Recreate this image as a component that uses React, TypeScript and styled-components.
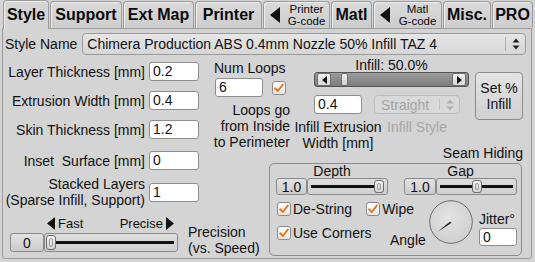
import React from 'react';
import styled, { createGlobalStyle } from 'styled-components';

const GlobalStyle = createGlobalStyle`
  html, body {
    margin: 0;
    padding: 0;
    background: #d4d4d4;
  }
  body {
    width: 535px;
    height: 262px;
    overflow: hidden;
    font-family: "Liberation Sans", Arial, sans-serif;
    font-size: 14px;
    color: #111;
  }
  * { box-sizing: border-box; }
`;

const Page = styled.div`
  width: 535px;
  height: 262px;
  display: flex;
  flex-direction: column;
`;

/* ---------- tabs ---------- */

const TabBar = styled.div`
  height: 28px;
  display: flex;
  align-items: flex-end;
  gap: 1px;
  padding-left: 3px;
`;

const Tab = styled.div<{ $w: number; $active?: boolean }>`
  width: ${p => p.$w}px;
  height: ${p => (p.$active ? 29 : 27)}px;
  margin-bottom: ${p => (p.$active ? -1 : 0)}px;
  position: relative;
  z-index: ${p => (p.$active ? 2 : 0)};
  border: 1px solid #9a9a9a;
  border-bottom: none;
  border-radius: 4px 4px 0 0;
  background: ${p => (p.$active ? '#d4d4d4' : 'linear-gradient(#dadada, #cdcdcd)')};
  box-shadow: inset 1px 1px 0 #ececec;
  display: flex;
  align-items: center;
  justify-content: center;
  font-weight: bold;
  font-size: 16px;
  color: #0a0a0a;
`;

const ArrowTabInner = styled.div`
  display: flex;
  align-items: center;
  width: 100%;
  padding-left: 6px;
  gap: 4px;
`;

const SmallTabText = styled.div`
  flex: 1;
  display: flex;
  flex-direction: column;
  align-items: center;
  gap: 1px;
  font-weight: normal;
  font-size: 11.5px;
  line-height: 11px;
`;

/* ---------- panel ---------- */

const Panel = styled.div`
  height: 231px;
  margin: 0 3px 0 2px;
  border: 1px solid #9a9a9a;
  border-radius: 0 0 3px 3px;
  display: flex;
  flex-direction: column;
`;

const NameRow = styled.div`
  display: flex;
  align-items: center;
  height: 22px;
  margin-top: 4px;
  padding-left: 2px;
`;

const NameLabel = styled.span`
  margin-right: 5px;
  white-space: nowrap;
`;

const SelectBox = styled.div<{ $w: number; $disabled?: boolean }>`
  width: ${p => p.$w}px;
  height: ${p => (p.$disabled ? 19 : 22)}px;
  display: flex;
  align-items: center;
  border: 1px solid ${p => (p.$disabled ? '#bcbcbc' : '#9a9a9a')};
  border-radius: 4px;
  background: ${p => (p.$disabled ? '#d9d9d9' : 'linear-gradient(#e6e6e6, #d6d6d6)')};
  color: ${p => (p.$disabled ? '#a4a4a4' : '#111')};
  padding-left: ${p => (p.$disabled ? 6 : 4)}px;
  white-space: nowrap;
`;

const SelectText = styled.span`
  flex: 1;
  overflow: hidden;
`;

const SelectSep = styled.span<{ $disabled?: boolean }>`
  width: 1px;
  align-self: stretch;
  margin: 3px 0;
  background: ${p => (p.$disabled ? '#c2c2c2' : '#b0b0b0')};
`;

const SelectArrows = styled.span`
  width: 19px;
  display: flex;
  justify-content: center;
`;

const TopSection = styled.div`
  display: flex;
  height: 92px;
  margin-top: 3px;
`;

const FormCol = styled.div`
  width: 196px;
  padding-top: 4px;
  display: flex;
  flex-direction: column;
  gap: 10px;
`;

const FieldRow = styled.div<{ $top?: number }>`
  width: 196px;
  display: flex;
  align-items: center;
  justify-content: flex-end;
  gap: 4px;
  margin-top: ${p => p.$top ?? 0}px;
`;

const FieldLabel = styled.span`
  text-align: right;
  line-height: 16px;
  white-space: nowrap;
`;

const TextInput = styled.div<{ $w: number; $h?: number }>`
  width: ${p => p.$w}px;
  height: ${p => p.$h ?? 19}px;
  flex: none;
  background: #fff;
  border: 1px solid #8e8e8e;
  border-radius: 3px;
  padding-left: 3px;
  line-height: ${p => (p.$h ?? 19) - 2}px;
`;

const LoopsCol = styled.div`
  width: 80px;
  margin-left: 11px;
  display: flex;
  flex-direction: column;
`;

const LoopsTitle = styled.div`
  padding-left: 4px;
  margin-top: 2px;
  line-height: 16px;
`;

const LoopsInputRow = styled.div`
  display: flex;
  align-items: center;
  gap: 9px;
  margin-top: 2px;
  padding-left: 5px;
`;

const LoopsText = styled.div`
  margin-top: 5px;
  text-align: right;
  line-height: 16px;
  white-space: nowrap;
`;

const InfillCol = styled.div`
  display: flex;
  margin-left: 24px;
`;

const InfillMain = styled.div`
  width: 155px;
  display: flex;
  flex-direction: column;
`;

const InfillTitle = styled.div`
  text-align: center;
  line-height: 14px;
  height: 14px;
`;

const ScrollTrough = styled.div`
  height: 17px;
  display: flex;
  align-items: center;
  padding: 0 2px;
  border: 1px solid #555;
  border-radius: 3px;
  background: linear-gradient(#9c9c9c, #7c7c7c);
`;

const ScrollBtn = styled.div`
  width: 14px;
  height: 13px;
  display: flex;
  align-items: center;
  justify-content: center;
  background: linear-gradient(#f0f0f0, #d8d8d8);
  border: 1px solid #6e6e6e;
  border-radius: 2px;
`;

const ScrollLane = styled.div`
  flex: 1;
  height: 13px;
  display: flex;
  align-items: center;
`;

const ScrollThumb = styled.div`
  width: 7px;
  height: 13px;
  background: linear-gradient(#efefef, #d2d2d2);
  border: 1px solid #707070;
  border-radius: 2px;
`;

const InfillFields = styled.div`
  display: flex;
  gap: 12px;
  margin-top: 8px;
`;

const FieldStack = styled.div<{ $w: number }>`
  width: ${p => p.$w}px;
  display: flex;
  flex-direction: column;
  align-items: center;
`;

const StackLabel = styled.div<{ $disabled?: boolean }>`
  margin-top: 5px;
  line-height: 16px;
  text-align: center;
  white-space: nowrap;
  color: ${p => (p.$disabled ? '#a6a6a6' : '#111')};
`;

const SetButton = styled.div`
  width: 48px;
  height: 48px;
  margin-left: 6px;
  margin-top: 14px;
  border: 1px solid #8c8c8c;
  border-radius: 4px;
  background: linear-gradient(#e4e4e4, #d0d0d0);
  display: flex;
  align-items: center;
  justify-content: center;
  text-align: center;
  line-height: 16px;
`;

const BottomSection = styled.div`
  display: flex;
`;

const LeftBottom = styled.div`
  width: 266px;
  display: flex;
  flex-direction: column;
`;

const PrecisionBlock = styled.div`
  display: flex;
  align-items: flex-end;
  margin-top: 8px;
  padding-left: 7px;
`;

const SliderStack = styled.div`
  width: 168px;
  display: flex;
  flex-direction: column;
`;

const ArrowsRow = styled.div`
  height: 15px;
  display: flex;
  justify-content: space-between;
  align-items: center;
  padding: 0 4px 0 37px;
  font-size: 13px;
  line-height: 14px;
`;

const ArrowText = styled.span`
  display: flex;
  align-items: center;
  gap: 3px;
`;

const PrecisionText = styled.div`
  margin-left: 10px;
  margin-bottom: -4px;
  line-height: 16px;
`;

const SliderRow = styled.div<{ $h: number; $top?: number }>`
  display: flex;
  height: ${p => p.$h}px;
  margin-top: ${p => p.$top ?? 0}px;
`;

const ValueBox = styled.div<{ $w: number }>`
  width: ${p => p.$w}px;
  flex: none;
  border: 1px solid #8a8a8a;
  border-radius: 3px;
  background: linear-gradient(#e2e2e2, #cccccc);
  display: flex;
  align-items: center;
  justify-content: center;
`;

const Track = styled.div`
  flex: 1;
  position: relative;
  border: 1px solid #8a8a8a;
  border-radius: 3px;
  background: linear-gradient(#dedede, #d0d0d0);
  display: flex;
  align-items: center;
  padding: 0 3px;
`;

const TrackLine = styled.div`
  flex: 1;
  height: 3px;
  background: #111;
`;

const TrackThumb = styled.div`
  position: absolute;
  top: 1px;
  bottom: 1px;
  width: 10px;
  border: 1px solid #6a6a6a;
  border-radius: 3px;
  background: linear-gradient(#f4f4f4, #d2d2d2);
  &::after {
    content: '';
    position: absolute;
    left: 2px;
    right: 2px;
    top: 2px;
    bottom: 2px;
    border: 1px solid #9a9a9a;
    border-radius: 2px;
  }
`;

const SeamCol = styled.div`
  width: 254px;
  display: flex;
  flex-direction: column;
`;

const SeamTitle = styled.div`
  text-align: right;
  line-height: 14px;
  margin-top: -4px;
`;

const GroupBox = styled.div`
  height: 93px;
  margin-top: 3px;
  margin-right: 1px;
  border: 1px solid #8c8c8c;
  border-radius: 5px;
  padding: 0 4px 0 6px;
  display: flex;
  flex-direction: column;
`;

const SlidersRow = styled.div`
  display: flex;
  gap: 16px;
`;

const SliderGroup = styled.div<{ $w: number }>`
  width: ${p => p.$w}px;
  display: flex;
  flex-direction: column;
`;

const SliderTitle = styled.div`
  text-align: center;
  line-height: 14px;
`;

const LowerRow = styled.div`
  display: flex;
  align-items: flex-start;
  margin-top: 7px;
`;

const ChecksCol = styled.div`
  width: 113px;
  margin-left: 1px;
  display: flex;
  flex-direction: column;
  gap: 10px;
`;

const CheckRow = styled.div`
  display: flex;
  gap: 14px;
`;

const CheckItem = styled.label`
  display: flex;
  align-items: center;
  gap: 2px;
  line-height: 14px;
  white-space: nowrap;
`;

const AngleLabel = styled.div`
  width: 37px;
  margin-top: 31px;
  margin-right: 3px;
  line-height: 14px;
`;

const DialWrap = styled.div`
  width: 44px;
  height: 44px;
  margin-top: -2px;
`;

const JitterCol = styled.div`
  margin-left: 6px;
  display: flex;
  flex-direction: column;
`;

const JitterTitle = styled.div`
  margin-top: 10px;
  line-height: 14px;
`;

/* ---------- small drawings ---------- */

const LeftTri = ({ w = 10, h = 16 }: { w?: number; h?: number }) => (
  <svg width={w} height={h} viewBox={`0 0 ${w} ${h}`}>
    <polygon points={`${w},0 ${w},${h} 0,${h / 2}`} fill="#111" />
  </svg>
);

const RightTri = ({ w = 8, h = 12 }: { w?: number; h?: number }) => (
  <svg width={w} height={h} viewBox={`0 0 ${w} ${h}`}>
    <polygon points={`0,0 0,${h} ${w},${h / 2}`} fill="#111" />
  </svg>
);

const UpDown = ({ color }: { color: string }) => (
  <svg width="8" height="12" viewBox="0 0 8 12">
    <polygon points="4,0.5 7.5,4.5 0.5,4.5" fill={color} />
    <polygon points="4,11.5 7.5,7.5 0.5,7.5" fill={color} />
  </svg>
);

const CheckBox = () => (
  <svg width="14" height="14" viewBox="0 0 14 14">
    <defs>
      <linearGradient id="cbg" x1="0" y1="0" x2="0" y2="1">
        <stop offset="0" stopColor="#ffffff" />
        <stop offset="1" stopColor="#e6e6e6" />
      </linearGradient>
    </defs>
    <rect x="0.5" y="0.5" width="13" height="13" rx="2.5" fill="url(#cbg)" stroke="#8a8a8a" />
    <path d="M3.2 7.2 L5.8 10 L10.8 3.6" fill="none" stroke="#e07a2a" strokeWidth="2" strokeLinecap="round" strokeLinejoin="round" />
  </svg>
);

const Dial = () => (
  <svg width="44" height="44" viewBox="0 0 44 44">
    <defs>
      <radialGradient id="dialg" cx="0.45" cy="0.4" r="0.65">
        <stop offset="0" stopColor="#e4e4e4" />
        <stop offset="1" stopColor="#cdcdcd" />
      </radialGradient>
    </defs>
    <circle cx="22" cy="22" r="21.3" fill="url(#dialg)" stroke="#6c6c6c" strokeWidth="1" />
    <path d="M21.2 21.4 L22.4 23 L8.6 31.8 Z" fill="#111" />
    <line x1="19" y1="24.2" x2="22" y2="22.2" stroke="#555" strokeWidth="1" />
  </svg>
);

const Slider = ({ value, valueW, fraction, h }: { value: string; valueW: number; fraction: number; h: number }) => (
  <SliderRow $h={h}>
    <ValueBox $w={valueW}>{value}</ValueBox>
    <Track>
      <TrackLine />
      <TrackThumb style={{ left: `calc(${fraction * 100}% - ${fraction * 10}px)` }} />
    </Track>
  </SliderRow>
);

const Select = ({ text, w, disabled }: { text: string; w: number; disabled?: boolean }) => (
  <SelectBox $w={w} $disabled={disabled}>
    <SelectText>{text}</SelectText>
    <SelectSep $disabled={disabled} />
    <SelectArrows>
      <UpDown color={disabled ? '#b0b0b0' : '#222'} />
    </SelectArrows>
  </SelectBox>
);

type TabDef = { label: string; sub?: string; w: number; active?: boolean };

const tabs: TabDef[] = [
  { label: 'Style', w: 46, active: true },
  { label: 'Support', w: 72 },
  { label: 'Ext Map', w: 71 },
  { label: 'Printer', w: 67 },
  { label: 'Printer', sub: 'G-code', w: 67 },
  { label: 'Matl', w: 41 },
  { label: 'Matl', sub: 'G-code', w: 69 },
  { label: 'Misc.', w: 48 },
  { label: 'PRO', w: 41 },
];

const fields = [
  { label: 'Layer Thickness [mm]', value: '0.2' },
  { label: 'Extrusion Width [mm]', value: '0.4' },
  { label: 'Skin Thickness [mm]', value: '1.2' },
];

export default function App() {
  return (
    <Page>
      <GlobalStyle />
      <TabBar>
        {tabs.map((t, i) => (
          <Tab key={i} $w={t.w} $active={t.active}>
            {t.sub ? (
              <ArrowTabInner>
                <LeftTri />
                <SmallTabText>
                  <span>{t.label}</span>
                  <span>{t.sub}</span>
                </SmallTabText>
              </ArrowTabInner>
            ) : (
              t.label
            )}
          </Tab>
        ))}
      </TabBar>

      <Panel>
        <NameRow>
          <NameLabel>Style Name</NameLabel>
          <Select text="Chimera Production ABS 0.4mm Nozzle 50% Infill TAZ 4" w={444} />
        </NameRow>

        <TopSection>
          <FormCol>
            {fields.map(f => (
              <FieldRow key={f.label}>
                <FieldLabel>{f.label}</FieldLabel>
                <TextInput $w={50}>{f.value}</TextInput>
              </FieldRow>
            ))}
          </FormCol>

          <LoopsCol>
            <LoopsTitle>Num Loops</LoopsTitle>
            <LoopsInputRow>
              <TextInput $w={48}>6</TextInput>
              <CheckBox />
            </LoopsInputRow>
            <LoopsText>
              Loops go
              <br />
              from Inside
              <br />
              to Perimeter
            </LoopsText>
          </LoopsCol>

          <InfillCol>
            <InfillMain>
              <InfillTitle>Infill: 50.0%</InfillTitle>
              <ScrollTrough>
                <ScrollBtn>
                  <LeftTri w={5} h={8} />
                </ScrollBtn>
                <ScrollLane>
                  <ScrollThumb style={{ marginLeft: 10 }} />
                </ScrollLane>
                <ScrollBtn>
                  <RightTri w={5} h={8} />
                </ScrollBtn>
              </ScrollTrough>
              <InfillFields>
                <FieldStack $w={48}>
                  <TextInput $w={48}>0.4</TextInput>
                  <StackLabel>
                    Infill Extrusion
                    <br />
                    Width [mm]
                  </StackLabel>
                </FieldStack>
                <FieldStack $w={86}>
                  <Select text="Straight" w={86} disabled />
                  <StackLabel $disabled>Infill Style</StackLabel>
                </FieldStack>
              </InfillFields>
            </InfillMain>
            <SetButton>
              Set %
              <br />
              Infill
            </SetButton>
          </InfillCol>
        </TopSection>

        <BottomSection>
          <LeftBottom>
            <FieldRow $top={1}>
              <FieldLabel>Inset&nbsp; Surface [mm]</FieldLabel>
              <TextInput $w={50}>0</TextInput>
            </FieldRow>
            <FieldRow $top={6}>
              <FieldLabel>
                Stacked Layers
                <br />
                (Sparse Infill, Support)
              </FieldLabel>
              <TextInput $w={50}>1</TextInput>
            </FieldRow>
            <PrecisionBlock>
              <SliderStack>
                <ArrowsRow>
                  <ArrowText>
                    <LeftTri w={8} h={13} />
                    Fast
                  </ArrowText>
                  <ArrowText>
                    Precise
                    <RightTri w={8} h={13} />
                  </ArrowText>
                </ArrowsRow>
                <SliderRow $h={19} $top={2}>
                  <ValueBox $w={34}>0</ValueBox>
                  <Track>
                    <TrackLine />
                    <TrackThumb style={{ left: 1 }} />
                  </Track>
                </SliderRow>
              </SliderStack>
              <PrecisionText>
                Precision
                <br />
                (vs. Speed)
              </PrecisionText>
            </PrecisionBlock>
          </LeftBottom>

          <SeamCol>
            <SeamTitle>Seam Hiding</SeamTitle>
            <GroupBox>
              <SlidersRow>
                <SliderGroup $w={112}>
                  <SliderTitle>Depth</SliderTitle>
                  <Slider value="1.0" valueW={31} fraction={0.95} h={17} />
                </SliderGroup>
                <SliderGroup $w={113}>
                  <SliderTitle>Gap</SliderTitle>
                  <Slider value="1.0" valueW={32} fraction={0.5} h={17} />
                </SliderGroup>
              </SlidersRow>
              <LowerRow>
                <ChecksCol>
                  <CheckRow>
                    <CheckItem>
                      <CheckBox />
                      De-String
                    </CheckItem>
                    <CheckItem>
                      <CheckBox />
                      Wipe
                    </CheckItem>
                  </CheckRow>
                  <CheckItem>
                    <CheckBox />
                    Use Corners
                  </CheckItem>
                </ChecksCol>
                <AngleLabel>Angle</AngleLabel>
                <DialWrap>
                  <Dial />
                </DialWrap>
                <JitterCol>
                  <JitterTitle>Jitter°</JitterTitle>
                  <TextInput $w={38} $h={18} style={{ marginTop: 2 }}>
                    0
                  </TextInput>
                </JitterCol>
              </LowerRow>
            </GroupBox>
          </SeamCol>
        </BottomSection>
      </Panel>
    </Page>
  );
}
